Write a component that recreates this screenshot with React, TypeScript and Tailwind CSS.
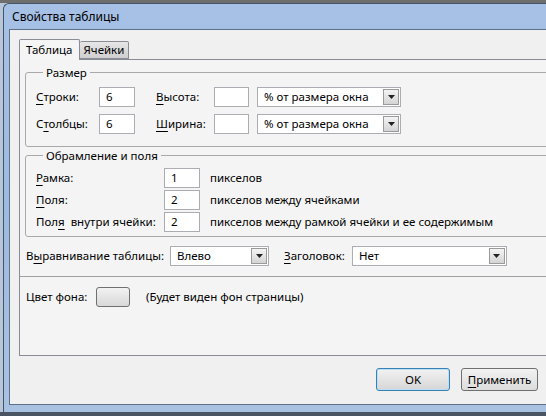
import React from "react";

function Field({ value, w }: { value: string; w: string }) {
  return (
    <div className={`flex h-[20px] items-center border border-[#abadb3] bg-white pl-[6px] ${w}`}>
      {value}
    </div>
  );
}

function Select({ value, w }: { value: string; w: string }) {
  return (
    <div className={`flex h-[20px] items-center border border-[#abadb3] bg-white ${w}`}>
      <span className="flex-1 pl-[6px]">{value}</span>
      <span className="mr-[1px] flex h-[16px] w-[16px] items-center justify-center border border-[#9a9a9a] bg-gradient-to-b from-[#f4f4f4] to-[#d4d4d4]">
        <svg width="7" height="4" viewBox="0 0 7 4">
          <path d="M0 0h7L3.5 4z" fill="#222" />
        </svg>
      </span>
    </div>
  );
}

function Key({ children }: { children: React.ReactNode }) {
  return <u className="underline-offset-[3px]">{children}</u>;
}

export default function App() {
  return (
    <div className="h-[416px] w-[546px] overflow-hidden whitespace-nowrap bg-[#b7c6d8] font-['Noto_Sans','Open_Sans',sans-serif] text-[11.5px] leading-none text-black">
      <div className="h-[3px] bg-[#6e6e6e]" />
      <div className="ml-[3px] flex h-[409px] w-[580px] flex-col rounded-tl-[6px] border-l border-t border-[#42536a] bg-gradient-to-b from-[#a6c1e5] via-[#9dbae0] to-[#a9c2e2] pb-[7px] pl-[5px]">
        <div className="flex h-[25px] items-center pl-[3px] pt-[1px] text-[12px]">Свойства таблицы</div>
        <div className="flex flex-1 flex-col border-b border-l border-t border-[#5e7188] bg-[#f0f0f0] pl-[9px] pt-[9px]">
          {/* tabs */}
          <div className="flex h-[20px] items-end">
            <div className="relative z-10 -mb-px flex h-[21px] items-center rounded-t-[2px] border border-b-0 border-[#898c95] bg-[#f5f5f5] px-[6px]">
              Таблица
            </div>
            <div className="flex h-[18px] items-center rounded-t-[2px] border border-l-0 border-[#898c95] bg-gradient-to-b from-[#e6e6e6] to-[#cfcfcf] px-[4px]">
              Ячейки
            </div>
          </div>
          <div className="flex h-[297px] flex-col border border-[#898c95] bg-[#f4f4f4] pl-[5px] pt-[7px]">
            <fieldset className="rounded-[3px] border border-[#a9a9a9] pb-[12px] pl-[10px] pt-[8px]">
              <legend className="ml-[7px] px-[3px]">Размер</legend>
              <div className="flex flex-col gap-[7px]">
                <div className="flex items-center">
                  <span className="w-[63px]"><Key>С</Key>троки:</span>
                  <Field value="6" w="w-[36px]" />
                  <span className="ml-[21px] w-[58px]"><Key>В</Key>ысота:</span>
                  <Field value="" w="w-[35px]" />
                  <div className="ml-[8px]"><Select value="% от размера окна" w="w-[144px]" /></div>
                </div>
                <div className="flex items-center">
                  <span className="w-[63px]">С<Key>т</Key>олбцы:</span>
                  <Field value="6" w="w-[36px]" />
                  <span className="ml-[21px] w-[58px]"><Key>Ш</Key>ирина:</span>
                  <Field value="" w="w-[35px]" />
                  <div className="ml-[8px]"><Select value="% от размера окна" w="w-[144px]" /></div>
                </div>
              </div>
            </fieldset>
            <fieldset className="mt-[3px] rounded-[3px] border border-[#a9a9a9] pb-[4px] pl-[10px] pt-[7px]">
              <legend className="ml-[7px] px-[3px]">Обрамление и поля</legend>
              <div className="flex flex-col gap-[2px]">
                <div className="flex items-center">
                  <span className="w-[128px]"><Key>Р</Key>амка:</span>
                  <Field value="1" w="w-[36px]" />
                  <span className="ml-[10px]">пикселов</span>
                </div>
                <div className="flex items-center">
                  <span className="w-[128px]"><Key>П</Key>оля:</span>
                  <Field value="2" w="w-[36px]" />
                  <span className="ml-[10px]">пикселов между ячейками</span>
                </div>
                <div className="flex items-center">
                  <span className="w-[128px]">Пол<Key>я</Key>&nbsp; внутри ячейки:</span>
                  <Field value="2" w="w-[36px]" />
                  <span className="ml-[10px]">пикселов между рамкой ячейки и ее содержимым</span>
                </div>
              </div>
            </fieldset>
            <div className="mt-[9px] flex items-center pl-[1px]">
              <span className="w-[144px]">В<Key>ы</Key>равнивание таблицы:</span>
              <Select value="Влево" w="w-[99px]" />
              <span className="ml-[15px] mr-[7px]"><Key>З</Key>аголовок:</span>
              <Select value="Нет" w="w-[155px]" />
            </div>
            <div className="-ml-[5px] mt-[10px] border-t border-[#a0a0a0]" />
            <div className="mt-[10px] flex items-center pl-[1px]">
              <span className="w-[70px]">Цвет фона:</span>
              <div className="h-[20px] w-[34px] rounded-[3px] border border-[#707070] bg-gradient-to-b from-[#f2f2f2] to-[#d8d8d8]" />
              <span className="ml-[16px]">(Будет виден фон страницы)</span>
            </div>
          </div>
          <div className="mt-[12px] flex items-center pl-[357px]">
            <div className="flex h-[23px] w-[74px] items-center justify-center rounded-[3px] border border-[#3c7fb1] bg-gradient-to-b from-[#f2f2f2] to-[#d6d6d6] shadow-[inset_0_0_0_1px_#b6e1f9]">
              OK
            </div>
            <div className="ml-[11px] flex h-[23px] w-[77px] items-center justify-center rounded-[3px] border border-[#707070] bg-gradient-to-b from-[#f2f2f2] to-[#dcdcdc]">
              <Key>П</Key>рименить
            </div>
          </div>
        </div>
      </div>
      <div className="h-[4px] bg-[#4a5563]" />
    </div>
  );
}
